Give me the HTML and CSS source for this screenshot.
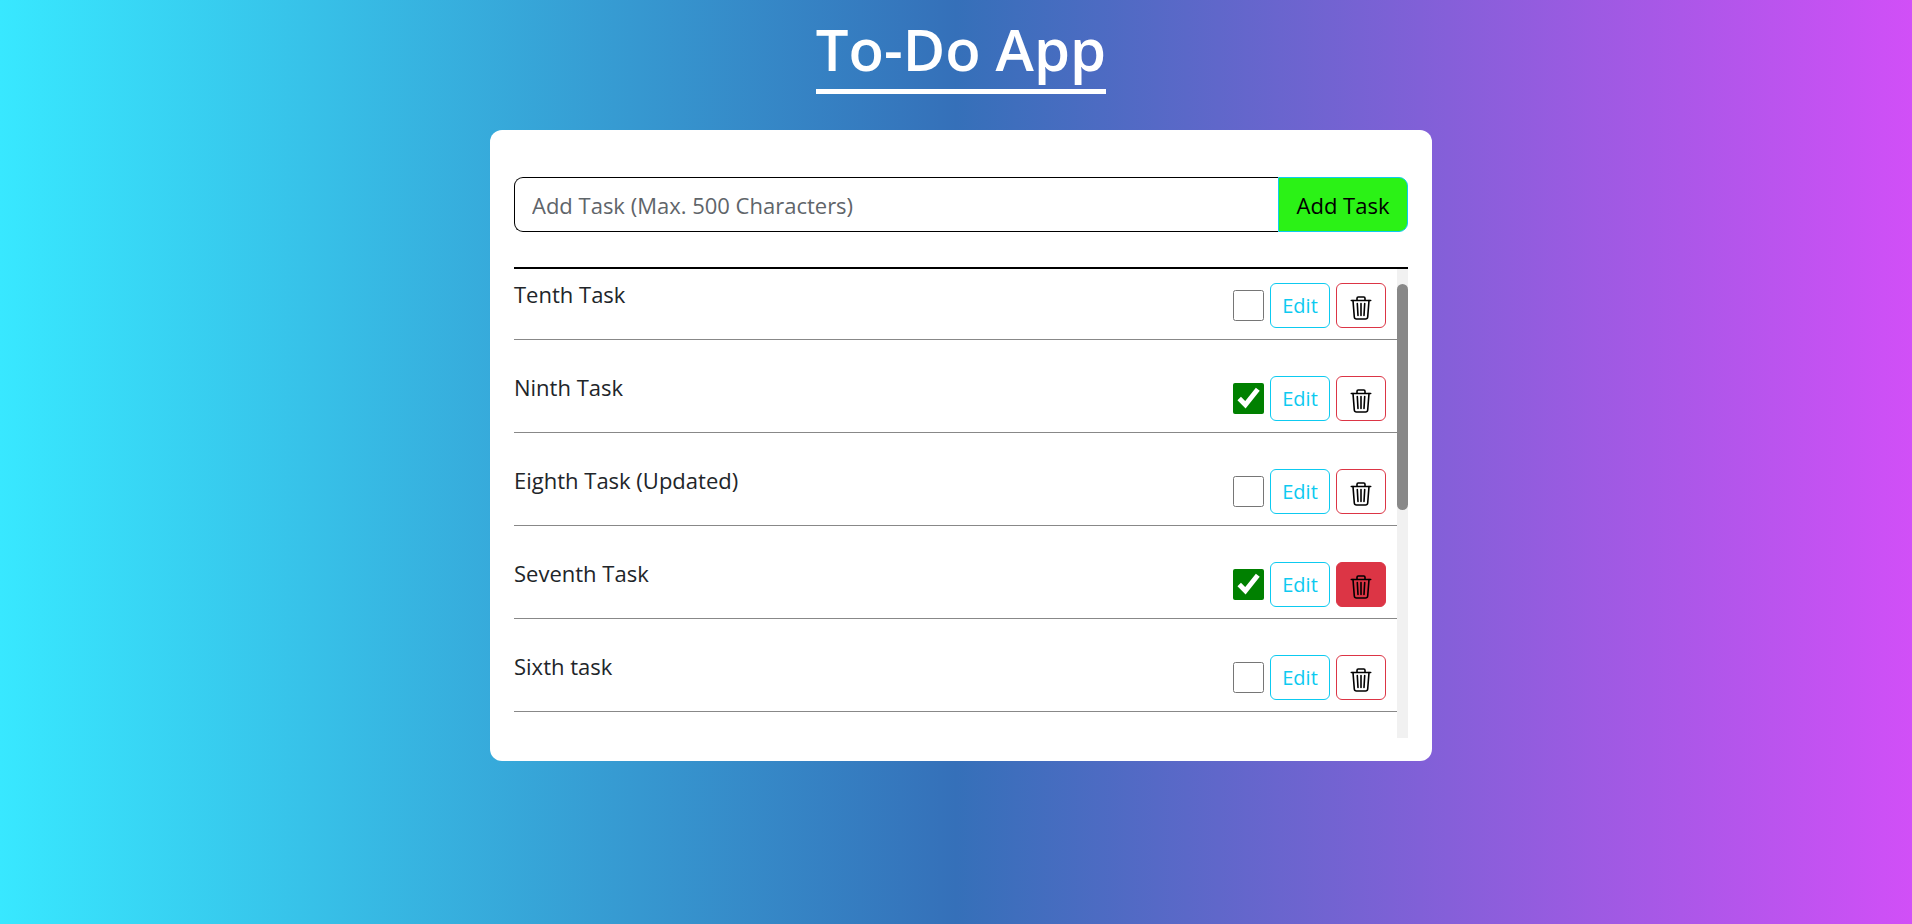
FILE: index.html
```html
<!DOCTYPE html>
<html lang="en">
<head>
<meta charset="utf-8">
<title>To-Do App</title>
<link rel="stylesheet" href="styles.css">
</head>
<body>
<svg class="sprite" aria-hidden="true">
  <symbol id="trash" viewBox="0 0 24 26">
    <g fill="none" stroke="#000" stroke-width="1.6" stroke-linecap="round" stroke-linejoin="round">
      <path d="M2.300 5.500h19.400M8 5V3.200Q8 2 9.200 2h5.600Q16 2 16 3.200V5"/>
      <path d="M4 5.500 5.300 22Q5.500 24 7.500 24h9Q18.500 24 18.700 22L20 5.500"/>
      <path d="M8.300 8.500l.7 12M12 8.500v12M15.700 8.500l-.7 12"/>
    </g>
  </symbol>
</svg>
<main class="page">
  <h1 class="title">To-Do App</h1>
  <section class="card">
    <form class="add-form">
      <input class="add-input" type="text" maxlength="500" aria-label="New task" placeholder="Add Task (Max. 500 Characters)">
      <button class="add-button" type="button">Add Task</button>
    </form>
    <div class="task-panel">
      <ul class="tasks">
        <li class="task">
          <label class="task-name" for="t10">Tenth Task</label>
          <div class="actions"><input class="check" type="checkbox" id="t10"><button class="edit" type="button">Edit</button><button class="delete" type="button" aria-label="Delete"><svg class="icon"><use href="#trash"/></svg></button></div>
        </li>
        <li class="task">
          <label class="task-name" for="t9">Ninth Task</label>
          <div class="actions"><input class="check" type="checkbox" id="t9" checked><button class="edit" type="button">Edit</button><button class="delete" type="button" aria-label="Delete"><svg class="icon"><use href="#trash"/></svg></button></div>
        </li>
        <li class="task">
          <label class="task-name" for="t8">Eighth Task (Updated)</label>
          <div class="actions"><input class="check" type="checkbox" id="t8"><button class="edit" type="button">Edit</button><button class="delete" type="button" aria-label="Delete"><svg class="icon"><use href="#trash"/></svg></button></div>
        </li>
        <li class="task">
          <label class="task-name" for="t7">Seventh Task</label>
          <div class="actions"><input class="check" type="checkbox" id="t7" checked><button class="edit" type="button">Edit</button><button class="delete active" type="button" aria-label="Delete"><svg class="icon"><use href="#trash"/></svg></button></div>
        </li>
        <li class="task">
          <label class="task-name" for="t6">Sixth task</label>
          <div class="actions"><input class="check" type="checkbox" id="t6"><button class="edit" type="button">Edit</button><button class="delete" type="button" aria-label="Delete"><svg class="icon"><use href="#trash"/></svg></button></div>
        </li>
      </ul>
      <div class="scroll-track"><div class="scroll-thumb"></div></div>
    </div>
  </section>
</main>
</body>
</html>
```
FILE: styles.css
```css
* { box-sizing: border-box; }

body {
  margin: 0;
  min-height: 100vh;
  font-family: "Open Sans", "Noto Sans", sans-serif;
  font-size: 22px;
  line-height: 34px;
  color: #212529;
  background: linear-gradient(90deg, #38e8ff, #3570b9 50%, #d14ff7);
}

.sprite { display: none; }

.page {
  display: flex;
  flex-direction: column;
  align-items: center;
  padding: 16px 0 24px 10px;
}

.title {
  margin: 0 0 36px;
  padding-bottom: 7px;
  font-size: 58px;
  font-weight: 600;
  line-height: 66px;
  color: #fff;
  border-bottom: 5px solid #fff;
}

.card {
  width: 942px;
  max-width: 100%;
  padding: 47px 24px 23px;
  background: #fff;
  border-radius: 12px;
}

.add-form {
  display: flex;
  margin-bottom: 35px;
}

.add-input,
.add-button {
  height: 55px;
  font: inherit;
}

.add-input {
  flex: 1;
  min-width: 0;
  padding: 0 17px;
  border: 1px solid #000;
  border-right: 0;
  border-radius: 9px 0 0 9px;
  background: #fff;
}

.add-input::placeholder { color: #5f656a; opacity: 1; }

.add-button {
  width: 130px;
  padding: 0;
  color: #000;
  background: #2bf216;
  border: 1px solid #0dcaf0;
  border-radius: 0 9px 9px 0;
}

.task-panel {
  display: flex;
  border-top: 2px solid #000;
}

.tasks {
  flex: 1;
  margin: 0;
  padding: 0 0 26px;
  list-style: none;
}

.task {
  display: flex;
  align-items: flex-start;
  justify-content: space-between;
  padding: 30px 11px 11px 0;
  border-bottom: 1px solid #888;
}

.task:first-child { padding-top: 8px; }

.actions {
  display: flex;
  align-items: center;
  gap: 6px;
  margin-top: 6px;
}

.check {
  width: 31px;
  height: 31px;
  margin: 0;
  accent-color: green;
}

.edit,
.delete {
  height: 45px;
  padding: 0;
  font: inherit;
  font-size: 20px;
  background: #fff;
  border-radius: 6px;
}

.edit {
  width: 60px;
  color: #0dcaf0;
  border: 1px solid #0dcaf0;
}

.delete {
  display: grid;
  place-items: center;
  width: 50px;
  border: 1px solid #dc3545;
}

.delete.active { background: #dc3545; }

.icon {
  width: 24px;
  height: 26px;
  margin-top: 4px;
}

.scroll-track {
  width: 11px;
  padding-top: 15px;
  background: #f1f1f1;
}

.scroll-thumb {
  height: 226px;
  border-radius: 6px;
  background: #888;
}
```
